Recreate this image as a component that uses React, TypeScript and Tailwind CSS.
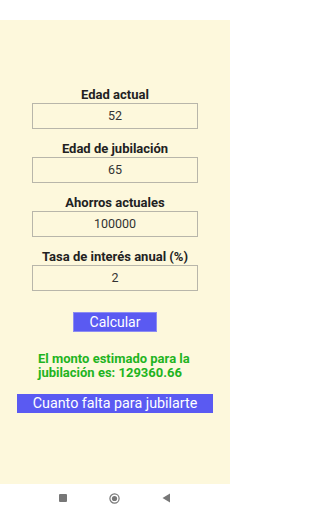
import React from 'react';

const fields = [
  { label: 'Edad actual', value: '52' },
  { label: 'Edad de jubilación', value: '65' },
  { label: 'Ahorros actuales', value: '100000' },
  { label: 'Tasa de interés anual (%)', value: '2' },
];

const App = () => {
  return (
    <div className="w-[230px] h-[512px] flex flex-col bg-white" style={{ fontFamily: 'Roboto, "Noto Sans", sans-serif' }}>
      {/* Status bar */}
      <div className="h-[20px] bg-white" />

      {/* Main content */}
      <div className="flex-1 bg-[#fdf8dc] flex flex-col items-center pt-[67px]">
        <div className="flex flex-col gap-[12px]">
          {fields.map((field, index) => (
            <div key={index} className="flex flex-col items-center">
              <label className="h-[16px] text-[13px] leading-[16px] font-bold text-[#222]">{field.label}</label>
              <div className="w-[166px] h-[26px] border border-[#b8b6aa] flex items-center justify-center text-[12.5px] text-[#333]">
                {field.value}
              </div>
            </div>
          ))}
        </div>

        <button className="mt-[21px] w-[84px] h-[20px] bg-[#5a5af2] border border-[#8c8cf2] text-white text-[14px] leading-[18px]">
          Calcular
        </button>

        <p className="mt-[20px] w-[154px] text-left text-[13px] leading-[14px] font-bold text-[#1fb41f]">
          El monto estimado para la jubilación es: 129360.66
        </p>

        <button className="mt-[14px] w-[196px] h-[19px] bg-[#5a5af2] text-white text-[14.3px] leading-[19px] whitespace-nowrap">
          Cuanto falta para jubilarte
        </button>
      </div>

      {/* Navigation bar */}
      <div className="h-[28px] bg-white flex items-center justify-center gap-[42px]">
        <div className="w-[8px] h-[8px] bg-[#777] rounded-[1px]" />
        <svg width="11" height="11" viewBox="0 0 11 11">
          <circle cx="5.5" cy="5.5" r="4.6" fill="none" stroke="#777" strokeWidth="1.2" />
          <circle cx="5.5" cy="5.5" r="2.6" fill="#777" />
        </svg>
        <svg width="9" height="10" viewBox="0 0 9 10">
          <polygon points="8,0.5 8,9.5 0.5,5" fill="#777" />
        </svg>
      </div>
    </div>
  );
};

export default App;
